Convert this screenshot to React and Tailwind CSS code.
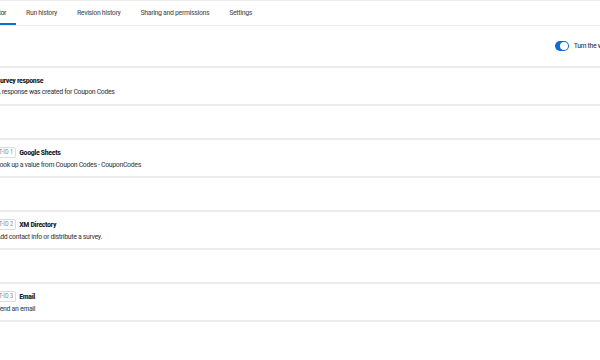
const tabs = ["Editor", "Run history", "Revision history", "Sharing and permissions", "Settings"];

const tasks = [
  { id: null, title: "Survey response", desc: "A response was created for Coupon Codes" },
  { id: "T-ID 1", title: "Google Sheets", desc: "Look up a value from Coupon Codes - CouponCodes" },
  { id: "T-ID 2", title: "XM Directory", desc: "Add contact info or distribute a survey." },
  { id: "T-ID 3", title: "Email", desc: "Send an email" },
];

export default function App() {
  return (
    <div
      className="w-[600px] h-[360px] overflow-hidden bg-white text-[#32363a] tracking-[-0.4px]"
      style={{ fontFamily: '"Roboto Condensed", "DejaVu Sans Condensed", sans-serif' }}
    >
      {/* Tabs */}
      <div className="h-[26px] border-y border-[#ededed] flex -ml-[20px]">
        {tabs.map((t, i) => (
          <div
            key={t}
            className={
              "px-[10px] pt-[2px] flex items-center text-[8px] whitespace-nowrap " +
              (i === 0 ? "border-b-2 border-[#0b6ed0] text-[#32363a]" : "border-b-2 border-transparent text-[#4a4f55]")
            }
          >
            {t}
          </div>
        ))}
      </div>

      {/* Toggle row */}
      <div className="h-[40px] flex items-center justify-end">
        <div className="flex items-center gap-[5px] -mr-[32px]">
          <div className="w-[14px] h-[10px] rounded-full bg-[#0b6ed0] flex items-center justify-end pr-[1px]">
            <div className="w-[8px] h-[8px] rounded-full bg-white" />
          </div>
          <span className="text-[8px] whitespace-nowrap text-[#32363a]">Turn the workflow on</span>
        </div>
      </div>

      {/* Tasks */}
      <div className="flex flex-col gap-[32px] -ml-[16px]">
        {tasks.map((task) => (
          <div
            key={task.title}
            className="h-[40px] border-y-2 border-[#ececec] px-[12px] flex flex-col justify-center gap-[3px]"
          >
            <div className="flex items-center gap-[3px]">
              {task.id && (
                <span className="text-[6.5px] tracking-normal leading-none text-[#8a8f94] border border-[#dcdcdc] rounded-[2px] px-[2px] py-[1.5px]">
                  {task.id}
                </span>
              )}
              <span className="text-[8px] leading-none font-bold text-[#222]">{task.title}</span>
            </div>
            <div className="text-[8px] leading-none text-[#3c4045]">{task.desc}</div>
          </div>
        ))}
      </div>
    </div>
  );
}
